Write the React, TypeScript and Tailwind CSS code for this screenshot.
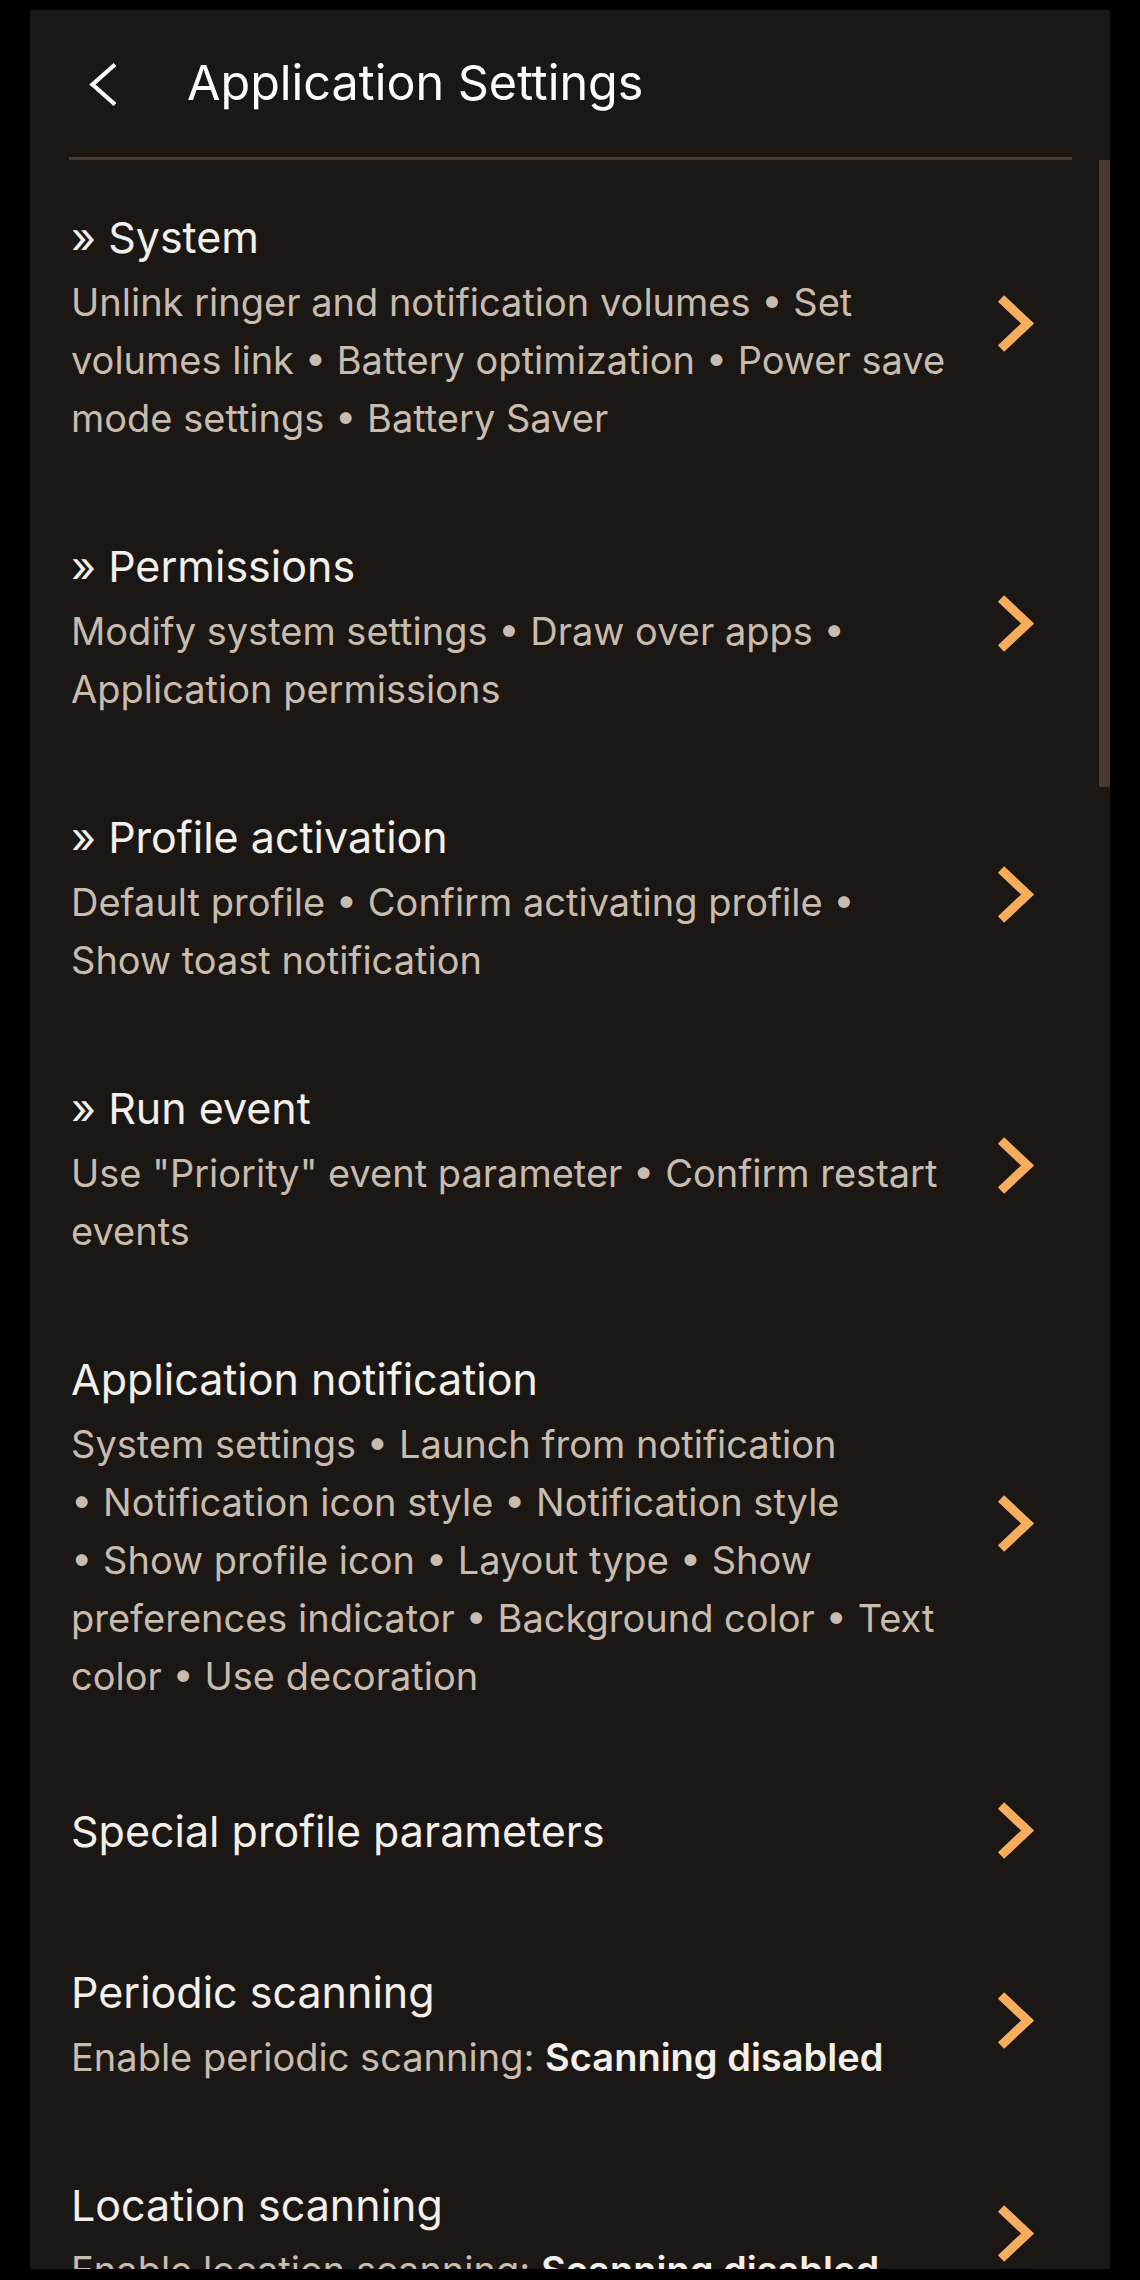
import React from 'react';

type TItem = {
    title: string;
    summary?: string;
    label?: string;
    value?: string;
}

const items: TItem[] = [
    { title: '» System', summary: 'Unlink ringer and notification volumes • Set volumes link • Battery optimization • Power save mode settings • Battery Saver' },
    { title: '» Permissions', summary: 'Modify system settings • Draw over apps • Application permissions' },
    { title: '» Profile activation', summary: 'Default profile • Confirm activating profile • Show toast notification' },
    { title: '» Run event', summary: 'Use "Priority" event parameter • Confirm restart events' },
    { title: 'Application notification', summary: 'System settings • Launch from notification •\u00A0Notification icon style •\u00A0Notification style •\u00A0Show profile icon •\u00A0Layout type •\u00A0Show preferences indicator •\u00A0Background color •\u00A0Text color •\u00A0Use decoration' },
    { title: 'Special profile parameters' },
    { title: 'Periodic scanning', label: 'Enable periodic scanning: ', value: 'Scanning disabled' },
    { title: 'Location scanning', label: 'Enable location scanning: ', value: 'Scanning disabled' },
];

const Chevron = () =>
    <svg width="42" height="68" viewBox="0 0 42 68" className="shrink-0">
        <polyline points="5,8.5 31.6,33.5 5,58.5" fill="none" stroke="#f6ad5c" strokeWidth="9" strokeLinejoin="miter" strokeLinecap="butt" />
    </svg>;

const BackArrow = () =>
    <svg width="34" height="52" viewBox="0 0 34 52" className="shrink-0">
        <polyline points="27,6.5 4.5,26.5 27,46.5" fill="none" stroke="#ffffff" strokeWidth="4.2" strokeLinejoin="miter" />
    </svg>;

const PrefRow = ({ item }: { item: TItem }) =>
    <div className="flex items-center min-h-[168px] pt-[41px] pb-[42px] pl-[41px] pr-[72px]">
        <div className="w-[884px] mr-auto">
            <div className="text-[43px] leading-[72px] text-[#f3efea]">{item.title}</div>
            {item.summary &&
                <div className="text-[38px] leading-[58px] text-[#c8bcaf]">{item.summary}</div>}
            {item.label &&
                <div className="text-[38px] leading-[58px] text-[#c8bcaf]">
                    {item.label}<span className="font-semibold text-[#f3efea]">{item.value}</span>
                </div>}
        </div>
        <Chevron />
    </div>;

export default function App() {
    return (
        <div className="w-[1140px] h-[2280px] bg-black pt-[10px] px-[30px] pb-[11px] font-['Inter',sans-serif]">
            <div className="relative h-full bg-[#1b1714] overflow-hidden flex flex-col">
                <div className="h-[147px] shrink-0 flex items-center pl-[58px]">
                    <BackArrow />
                    <span className="ml-[65px] text-[48.5px] text-white">Application Settings</span>
                </div>
                <div className="h-[3px] shrink-0 ml-[39px] mr-[38px] bg-[#4a3a2d]" />
                <div className="absolute right-0 top-[150px] w-[11px] h-[627px] bg-[#4a3a2d]" />
                <div className="flex flex-col">
                    {items.map((item, key) => <PrefRow key={key} item={item} />)}
                </div>
            </div>
        </div>
    );
}
